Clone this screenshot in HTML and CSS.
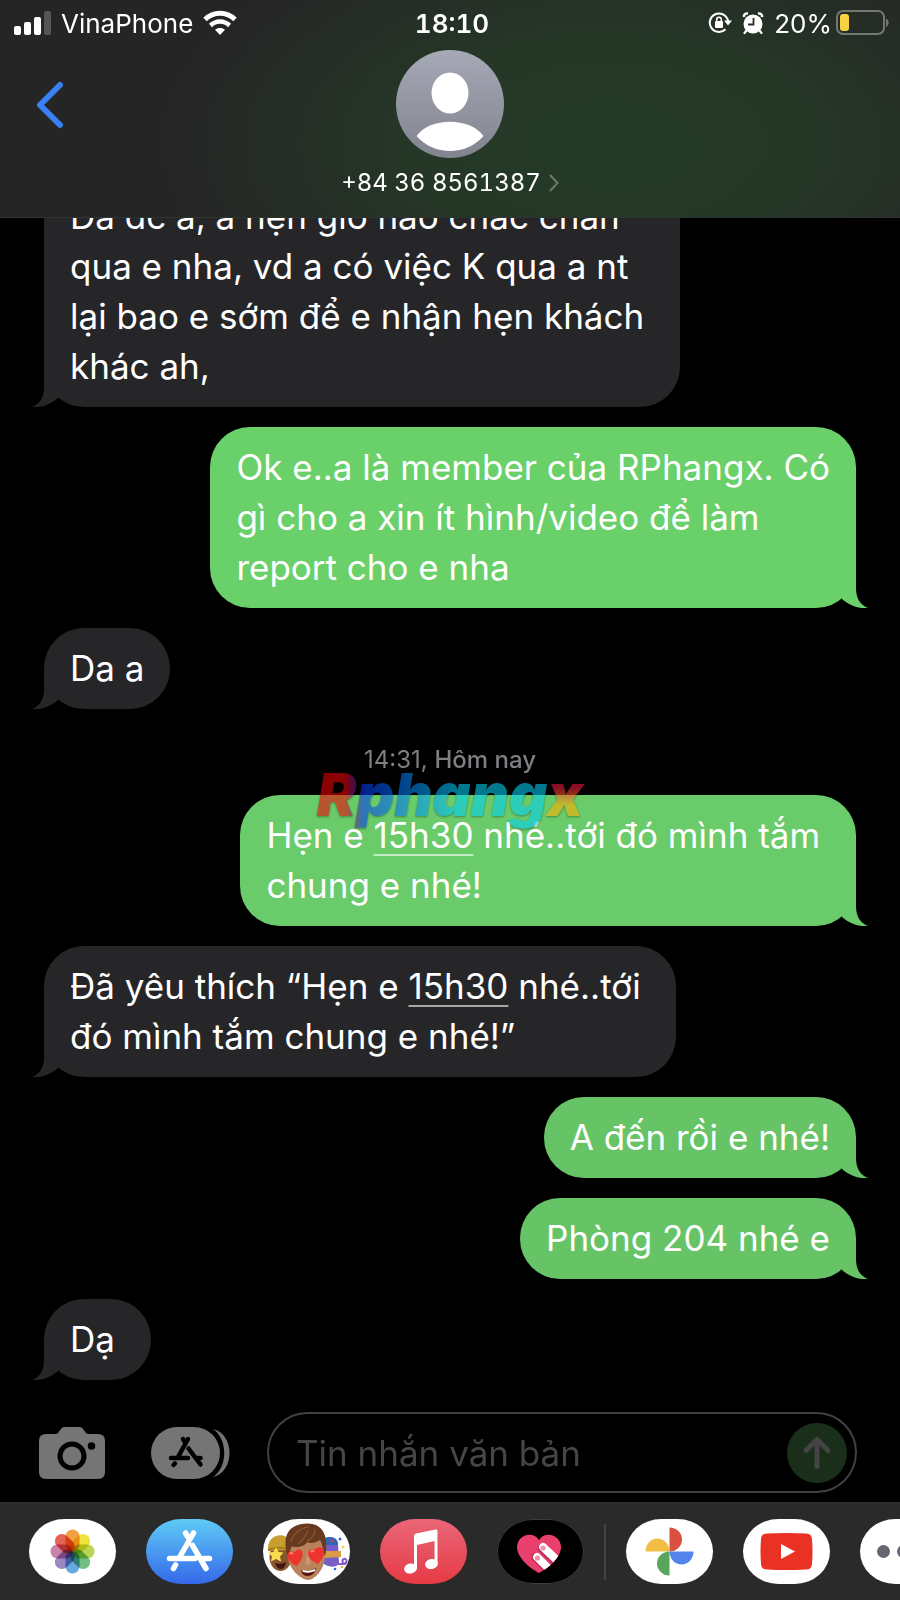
FILE: index.html
```html
<!DOCTYPE html>
<html lang="vi">
<head>
  <meta charset="UTF-8">
  <meta name="viewport" content="width=device-width, initial-scale=1">
  <title>+84 36 8561387</title>
  <link rel="stylesheet" href="styles.css">
</head>
<body>
<div class="phone">
  <header class="header">
    <div class="status">
      <div class="status-side">
        <svg class="signal" width="38" height="24" viewBox="0 0 38 24">
          <rect x="0" y="15" width="7" height="9" rx="2" fill="#fff"/>
          <rect x="10" y="11" width="7" height="13" rx="2" fill="#fff"/>
          <rect x="20" y="6" width="7" height="18" rx="2" fill="#fff"/>
          <rect x="30" y="0" width="7" height="24" rx="2" fill="#545654"/>
        </svg>
        <span class="carrier">VinaPhone</span>
        <svg width="34" height="26" viewBox="0 0 34 26" fill="none" stroke="#fff">
          <path d="M2 9.500C10.500 1.200 23.500 1.200 32 9.500" stroke-width="5"/>
          <path d="M7.500 15.500C13 10.300 21 10.300 26.500 15.500" stroke-width="4.500"/>
          <path d="M17 25l-5-5.200c2.800-2.500 7.200-2.500 10 0z" fill="#fff" stroke="none"/>
        </svg>
      </div>
      <span class="clock">18:10</span>
      <div class="status-side status-right">
        <svg width="24" height="24" viewBox="0 0 24 24">
          <path d="M20.200 12.500A9.200 9.200 0 1 0 17.500 18.700" transform="translate(0 -.5)" fill="none" stroke="#fff" stroke-width="2"/>
          <path d="M16 9.500h8l-4 5z" fill="#fff"/>
          <rect x="7" y="10" width="8" height="7" rx="1" fill="#fff"/>
          <path d="M8.700 10.500V8.500a2.300 2.300 0 0 1 4.600 0v2" fill="none" stroke="#fff" stroke-width="1.500"/>
        </svg>
        <svg class="alarm" width="22" height="24" viewBox="0 0 22 24">
          <circle cx="11" cy="13" r="9.500" fill="#fff"/>
          <path d="M2 6C1.500 3.500 3.500 2 6 2.500M20 6C20.500 3.500 18.500 2 16 2.500" stroke="#fff" stroke-width="2.500" fill="none"/>
          <path d="M4.500 19.500l-2 2.500M17.500 19.500l2 2.500" stroke="#fff" stroke-width="2.200" stroke-linecap="round"/>
          <path d="M11.500 7v6.500H6" stroke="#263027" stroke-width="1.800" fill="none"/>
        </svg>
        <span class="percent">20%</span>
        <svg width="54" height="26" viewBox="0 0 54 26">
          <rect x="1" y="1" width="47" height="23" rx="6" fill="none" stroke="#71786f" stroke-width="2"/>
          <rect x="4" y="4" width="9" height="17" rx="3" fill="#f7d344"/>
          <path d="M50 8.500c3.500 1.500 3.500 7 0 8.500z" fill="#71786f"/>
        </svg>
      </div>
    </div>
    <div class="contact-bar">
      <button class="back" aria-label="Quay lại">
        <svg width="28" height="48" viewBox="0 0 28 48">
          <path d="M24 4L4 24l20 20" fill="none" stroke="#3880f3" stroke-width="6" stroke-linecap="round" stroke-linejoin="round"/>
        </svg>
      </button>
      <a class="contact" href="#">
        <svg width="108" height="108" viewBox="0 0 108 108">
          <defs>
            <linearGradient id="avatarFill" x1="0" y1="0" x2="0" y2="1">
              <stop offset="0" stop-color="#a6a9b6"/>
              <stop offset="1" stop-color="#81848e"/>
            </linearGradient>
          </defs>
          <circle cx="54" cy="54" r="54" fill="url(#avatarFill)"/>
          <ellipse cx="54" cy="43" rx="18.500" ry="20.500" fill="#fff"/>
          <path d="M20.500 86C34 67 74 67 87.500 86C70 106 38 106 20.500 86z" fill="#fff"/>
        </svg>
        <span class="contact-name">+84 36 8561387
          <svg width="10" height="18" viewBox="0 0 10 18"><path d="M1 1l7.500 8L1 17" fill="none" stroke="#6b7a6d" stroke-width="2"/></svg>
        </span>
      </a>
    </div>
  </header>

  <main class="thread">
    <p class="bubble received">Da dc a, a hẹn giờ nào chắc chắn<br>qua e nha, vd a có việc K qua a nt<br>lại bao e sớm để e nhận hẹn khách&nbsp;<br>khác ah,</p>
    <p class="bubble sent">Ok e..a là member của RPhangx. Có<br>gì cho a xin ít hình/video để làm<br>report cho e nha</p>
    <p class="bubble received">Da a</p>
    <div class="time">
      14:31, <strong>Hôm nay</strong>
      <div class="watermark"><span class="mark-main">Rphang</span><span class="mark-x">x</span></div>
    </div>
    <p class="bubble sent mid">Hẹn e <a href="#">15h30</a> nhé..tới đó mình tắm&nbsp;<br>chung e nhé!</p>
    <p class="bubble received">Đã yêu thích “Hẹn e <a href="#">15h30</a> nhé..tới&nbsp;<br>đó mình tắm chung e nhé!”</p>
    <p class="bubble sent low">A đến rồi e nhé!</p>
    <p class="bubble sent low">Phòng 204 nhé e</p>
    <p class="bubble received">Dạ</p>
  </main>

  <form class="compose">
    <button class="tool" type="button" aria-label="Máy ảnh">
      <svg width="66" height="52" viewBox="0 0 66 52">
        <path d="M7 7h10c3 0 4-7 9-7h14c5 0 6 7 9 7h10q7 0 7 7v31q0 7-7 7H7q-7 0-7-7V14q0-7 7-7z" fill="#757575"/>
        <circle cx="33" cy="29" r="12" fill="none" stroke="#000" stroke-width="5"/>
        <circle cx="52.500" cy="19" r="3.800" fill="#000"/>
      </svg>
    </button>
    <button class="tool apps-tool" type="button" aria-label="Ứng dụng">
      <svg width="80" height="52" viewBox="0 0 80 52">
        <rect width="69" height="52" rx="26" fill="#757575"/>
        <path d="M62 2C84 7 84 45 62 50C77 40 77 12 62 2z" fill="#757575"/>
        <g fill="none" stroke="#000" stroke-width="4.500" stroke-linecap="round">
          <path d="M37 12L27 30M32 12l2.500 4M37.500 21.500L49.500 37.500M20 31h17M46.500 31h3M24 36.500l-1.500 1.500"/>
        </g>
      </svg>
    </button>
    <div class="field">
      <input type="text" aria-label="Tin nhắn văn bản" placeholder="Tin nhắn văn bản">
      <button class="send" aria-label="Gửi">
        <svg width="60" height="60" viewBox="0 0 60 60">
          <circle cx="30" cy="30" r="30" fill="#1a2f1a"/>
          <path d="M30 43.500V17M19 27.500L30 16.500l11 11" fill="none" stroke="#444345" stroke-width="5" stroke-linecap="round" stroke-linejoin="round"/>
        </svg>
      </button>
    </div>
  </form>

  <nav class="drawer">
    <button class="app" aria-label="Ảnh">
      <svg viewBox="0 0 87 65">
        <g class="petals" transform="translate(43.500 32.500)">
          <rect x="-7" y="-22" width="14" height="22" rx="7" fill="#f0a040"/>
          <rect x="-7" y="-22" width="14" height="22" rx="7" fill="#f2e23c" transform="rotate(45)"/>
          <rect x="-7" y="-22" width="14" height="22" rx="7" fill="#b9d455" transform="rotate(90)"/>
          <rect x="-7" y="-22" width="14" height="22" rx="7" fill="#70bd85" transform="rotate(135)"/>
          <rect x="-7" y="-22" width="14" height="22" rx="7" fill="#68a8dd" transform="rotate(180)"/>
          <rect x="-7" y="-22" width="14" height="22" rx="7" fill="#9c88c0" transform="rotate(225)"/>
          <rect x="-7" y="-22" width="14" height="22" rx="7" fill="#ca82ab" transform="rotate(270)"/>
          <rect x="-7" y="-22" width="14" height="22" rx="7" fill="#e26452" transform="rotate(315)"/>
        </g>
      </svg>
    </button>
    <button class="app app-store" aria-label="App Store">
      <svg viewBox="0 0 87 65">
        <path d="M47.500 14L34 37.500M39.500 14l4 6.500M46.500 26.500L60 49.500M23.500 39.500H49M57.500 39.500h6M29.500 46l-2 3.500" fill="none" stroke="#fff" stroke-width="5.500" stroke-linecap="round"/>
      </svg>
    </button>
    <button class="app" aria-label="Memoji">
      <svg viewBox="0 0 87 65">
        <ellipse cx="17.500" cy="38" rx="11" ry="14" fill="#84552f"/>
        <path d="M5 32C4 20 12 15 20 16.500L26 19v12z" fill="#c89f2e"/>
        <path d="M5 31q10-4 20-1" fill="none" stroke="#a47d1c" stroke-width="2"/>
        <path d="M12 44q6 2 11-1q-1 7-5 7t-6-6z" fill="#41140f"/>
        <path d="M13 28l2.500 5 5 .5-3.500 4 1 5-5-2.500-5 2.500 1-5-4-4 5.500-.5z" fill="#fbdc4c"/>
        <path d="M60 20c7-4 15-2 15 5l1 19c-2 6-13 4-17-1z" fill="#775dc7"/>
        <path d="M60 20c7-4 15-1 15 6H60z" fill="#2c68b4"/>
        <circle cx="69" cy="22" r="1.500" fill="#df344b"/>
        <path d="M61 32h17v6l-17 1z" fill="#dc9b46"/>
        <path d="M70 45h10c5 0 4-6 1-5s-1 5 0 3" fill="none" stroke="#875cc7" stroke-width="2"/>
        <circle cx="77" cy="20" r="1.500" fill="#3266df"/>
        <circle cx="80" cy="28" r="1.500" fill="#f3d943"/>
        <circle cx="79" cy="48" r="1.300" fill="#f3a943"/>
        <circle cx="72" cy="50" r="1.300" fill="#3266df"/>
        <path d="M25 26c0-16 37-16 37 0v13c-1 11-10 22-17 22S26 50 25 39z" fill="#b9825b"/>
        <path d="M45 32l-3 13q3 2 6 0z" fill="#cc9670"/>
        <path d="M25 38C19 20 23 5 44 4.500C61 4 66 19 62 37C60 32 60 26 57 21C52 24 47 25 44 23C42 28 32 29 29 27C27 30 27 34 25 38z" fill="#673a20"/>
        <path d="M28 23C30 15 37 9 46 8M35 25c5-3 8-9 10-14M44 22c6-3 8-7 8-12" fill="none" stroke="#8c5933" stroke-width="1.200"/>
        <path d="M38 51q8 2 15-2q-2 8-8 8t-7-6z" fill="#58150f"/>
        <path d="M39 51q7 2 13-1v2q-6 3-12 1z" fill="#fff"/>
        <path d="M34 47C20 41 23 29 32 33C36 26 46 33 34 47z" fill="#ed352d"/>
        <path d="M55 45C41 39 44 28 51 31C57 24 68 31 55 45z" fill="#ed352d"/>
        <path d="M27 35q2-2 3 0M48 33q2-2 3 0" stroke="#ff8276" stroke-width="2" fill="none"/>
      </svg>
    </button>
    <button class="app music" aria-label="Nhạc">
      <svg viewBox="0 0 87 65">
        <path d="M34 17q0-2 2-2.500l19.500-4q2-.5 2 1.500v32h-3V22L37 26v24h-3z" fill="#fff"/>
        <ellipse cx="30.500" cy="49.500" rx="6.500" ry="5" transform="rotate(-12 30.500 49.500)" fill="#fff"/>
        <ellipse cx="51.500" cy="45" rx="6.500" ry="5" transform="rotate(-12 51.500 45)" fill="#fff"/>
      </svg>
    </button>
    <button class="app touch" aria-label="Digital Touch">
      <svg viewBox="0 0 87 65">
        <defs>
          <clipPath id="heart"><path d="M42 54C32 49 20 38 20 28c0-12 16-17 22-7c6-10 22-5 22 7c0 10-12 21-22 26z"/></clipPath>
        </defs>
        <g clip-path="url(#heart)">
          <rect width="87" height="65" fill="#e93f6c"/>
          <path d="M45 29l20 19M39 38l20 20" stroke="#b92a52" stroke-width="9" stroke-linecap="round"/>
          <path d="M46 28l20 19M40 38l20 20" stroke="#fff" stroke-width="8" stroke-linecap="round"/>
          <circle cx="46" cy="29" r="2.600" fill="#f191ad"/>
          <circle cx="40.500" cy="39" r="2.600" fill="#f191ad"/>
        </g>
      </svg>
    </button>
    <span class="divider"></span>
    <button class="app" aria-label="Google Photos">
      <svg viewBox="0 0 87 65">
        <path d="M43.500 8.500a12.500 12 0 0 1 0 24z" fill="#d75040"/>
        <path d="M19.500 32.500a12 13 0 0 1 24 0z" fill="#f0bf42"/>
        <path d="M43.500 32.500h24a12 13 0 0 1-24 0z" fill="#5385ec"/>
        <path d="M43.500 56.500a12.500 12 0 0 1 0-24z" fill="#58a55c"/>
      </svg>
    </button>
    <button class="app" aria-label="YouTube">
      <svg viewBox="0 0 87 65">
        <path d="M24 14.500q19.500-1 39 0q6 0 6 6q1 12 0 24q0 6-6 6q-19.500 1-39 0q-6 0-6-6q-1-12 0-24q0-6 6-6z" fill="#e93223"/>
        <path d="M38 25l14 7.500L38 40z" fill="#fff"/>
      </svg>
    </button>
    <button class="app" aria-label="Thêm">
      <svg viewBox="0 0 87 65" fill="#666570">
        <circle cx="23.500" cy="32.500" r="6.500"/>
        <circle cx="43.500" cy="32.500" r="6.500"/>
        <circle cx="63.500" cy="32.500" r="6.500"/>
      </svg>
    </button>
  </nav>
</div>
</body>
</html>
```
FILE: styles.css
```css
* {
  margin: 0;
  padding: 0;
  box-sizing: border-box;
}

body {
  background-color: #000;
  color: #fff;
  font-family: Inter, "Noto Sans", sans-serif;
}

button {
  border: 0;
  background: none;
  cursor: pointer;
}

svg {
  display: block;
  flex-shrink: 0;
}

a {
  color: inherit;
}

.phone {
  display: flex;
  flex-direction: column;
  height: 100vh;
  overflow: hidden;
}

/* header */
.header {
  flex-shrink: 0;
  height: 218px;
  border-bottom: 1px solid #303431;
  background: radial-gradient(ellipse 50% 110% at 68% 66%, #253a27 0%, #253827 40%, rgba(36, 40, 36, 0) 100%), #252525;
}

.status {
  display: grid;
  grid-template-columns: 1fr auto 1fr;
  align-items: center;
  height: 46px;
  padding: 0 10px 0 14px;
  font-size: 26px;
}

.status-side {
  display: flex;
  align-items: center;
}

.carrier {
  margin: 0 10px 0 9px;
}

.clock {
  font-weight: 600;
  font-variant-numeric: tabular-nums;
}

.status-right {
  justify-content: flex-end;
}

.alarm {
  margin: 0 10px;
}

.percent {
  margin-right: 4px;
}

.contact-bar {
  display: grid;
  grid-template-columns: 1fr auto 1fr;
  align-items: start;
  padding: 4px 36px 0;
}

.back {
  justify-self: start;
  margin-top: 31px;
}

.contact {
  display: flex;
  flex-direction: column;
  align-items: center;
  text-decoration: none;
}

.contact-name {
  display: flex;
  align-items: center;
  gap: 8px;
  margin-top: 10px;
  font-size: 24px;
  line-height: 30px;
  font-variant-numeric: tabular-nums;
}

/* messages */
.thread {
  position: relative;
  flex: 1;
  min-height: 0;
  display: flex;
  flex-direction: column;
  justify-content: flex-end;
  gap: 20px;
  overflow: hidden;
  padding: 0 44px 32px;
}

.bubble {
  position: relative;
  flex-shrink: 0;
  min-width: 107px;
  padding: 15px 26px 16px 26px;
  border-radius: 40px;
  font-size: 35px;
  line-height: 50px;
  white-space: nowrap;
}

.bubble a {
  text-decoration: underline 2px rgba(255, 255, 255, .6);
  text-underline-offset: 6px;
  text-decoration-skip-ink: none;
}

.bubble::after {
  content: "";
  position: absolute;
  bottom: 0;
  left: -12px;
  width: 26px;
  height: 40px;
  background-color: inherit;
  clip-path: path("M12 0V20C12 30 8 37 0 40C10 41 19 37 26 31V0Z");
}

.received {
  align-self: flex-start;
  background-color: #262628;
}

.sent {
  align-self: flex-end;
  background-color: #6ad06a;
}

.sent::after {
  left: auto;
  right: -12px;
  transform: scaleX(-1);
}

.mid {
  background-color: #69cb69;
}

.low {
  background-color: #66c467;
}

.time {
  position: relative;
  z-index: 1;
  flex-shrink: 0;
  padding-top: 16px;
  color: #7f7f84;
  font-size: 24px;
  line-height: 30px;
  text-align: center;
}

.time strong {
  font-weight: 500;
}

.watermark {
  position: absolute;
  top: 30px;
  left: 0;
  right: 0;
  font-size: 59px;
  font-style: italic;
  font-weight: 900;
  line-height: 72px;
  opacity: .58;
  filter: drop-shadow(0 1px 1px rgba(0, 0, 0, .6));
  pointer-events: none;
}

.mark-main,
.mark-x {
  padding: 0 3px;
  margin: 0 -3px;
  color: transparent;
  -webkit-background-clip: text;
  background-clip: text;
}

.mark-main {
  background-image: linear-gradient(90deg, #f00000 13%, #0038f0 21%, #0088f0 42%, #00d0f5 62%);
}

.mark-x {
  background-image: linear-gradient(#f01840 40%, #ffb000 65%);
}

/* compose */
.compose {
  flex-shrink: 0;
  display: flex;
  align-items: center;
  padding: 0 43px 9px 39px;
}

.apps-tool {
  margin: 0 36px 0 46px;
}

.field {
  flex: 1;
  display: flex;
  align-items: center;
  min-width: 0;
  height: 81px;
  padding: 0 8px 0 27px;
  border: 2px solid #414143;
  border-radius: 41px;
}

.field input {
  flex: 1;
  min-width: 0;
  border: 0;
  outline: 0;
  background: none;
  color: #fff;
  font: inherit;
  font-size: 35px;
}

.field input::placeholder {
  color: #464648;
  opacity: 1;
}

/* app drawer */
.drawer {
  flex-shrink: 0;
  display: flex;
  align-items: center;
  gap: 30px;
  height: 98px;
  padding-left: 29px;
  border-top: 1px solid #303030;
  background-color: #2a2a2a;
  overflow: hidden;
}

.app {
  flex-shrink: 0;
  width: 87px;
  height: 65px;
  border-radius: 36px / 33px;
  background-color: #fff;
  overflow: hidden;
}

.app-store {
  background: linear-gradient(#5fcbf6, #3568e9);
}

.music {
  background: linear-gradient(#ea6678, #e63b45);
}

.touch {
  background-color: #000;
  box-shadow: inset 0 0 0 1px #3d3d3d;
}

.petals {
  isolation: isolate;
}

.petals rect {
  mix-blend-mode: multiply;
}

.divider {
  flex-shrink: 0;
  width: 2px;
  height: 56px;
  margin: 0 -10px;
  background-color: #434343;
}
```
